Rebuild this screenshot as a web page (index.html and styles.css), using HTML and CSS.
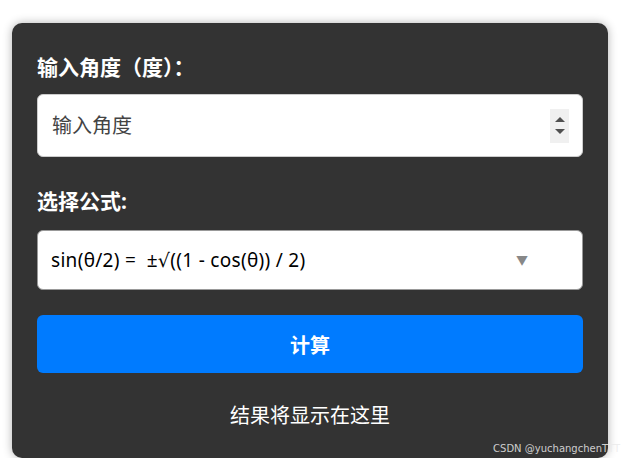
FILE: index.html
```html
<!DOCTYPE html>
<html lang="zh-CN">

<head>
    <meta charset="UTF-8">
    <meta name="viewport" content="width=device-width, initial-scale=1.0">
    <title>半角公式计算器</title>
    <link rel="stylesheet" href="styles.css">
</head>

<body>
    <div class="calculator">
        <!-- Angle input -->
        <label class="fieldLabel" for="angle">输入角度（度）：</label>
        <div class="numberBox">
            <input type="number" id="angle" class="angleInput" placeholder="输入角度">
            <span class="spinner">
                <span class="spinUp"></span>
                <span class="spinDown"></span>
            </span>
        </div>

        <!-- Formula select -->
        <label class="fieldLabel" for="formula">选择公式:</label>
        <div class="selectBox">
            <select id="formula" class="formulaSelect">
                <option value="sin">sin(θ/2) =&nbsp; ±√((1 - cos(θ)) / 2)</option>
                <option value="cos">cos(θ/2) =&nbsp; ±√((1 + cos(θ)) / 2)</option>
                <option value="tan">tan(θ/2) = sin(θ) / (1 + cos(θ))</option>
            </select>
            <span class="selectArrow">▼</span>
        </div>

        <button class="btnCalc" id="calcBtn">计算</button>

        <div class="result" id="result">结果将显示在这里</div>
    </div>

    <div class="watermark">CSDN @yuchangchenTTT</div>
</body>

</html>
```

FILE: styles.css
```css
body {
    font-family: "Noto Sans", "Noto Sans CJK SC", sans-serif;
    margin: 0;
    padding: 23px 14px 0 12px;
    background-color: #fff;
}

.calculator {
    background-color: #333;
    color: #fff;
    border-radius: 10px;
    box-shadow: 0 0 10px rgba(0, 0, 0, 0.3);
    padding: 30px 25px 27px;
    display: flex;
    flex-direction: column;
}

.fieldLabel {
    font-size: 21px;
    font-weight: bold;
    line-height: 28px;
    margin-bottom: 13px;
}

/* Number input */
.numberBox {
    display: flex;
    align-items: center;
    height: 63px;
    box-sizing: border-box;
    background: #fff;
    border: 1px solid #ccc;
    border-radius: 6px;
    padding: 0 13px 0 14px;
    margin-bottom: 30px;
}

.angleInput {
    flex: 1;
    border: none;
    outline: none;
    font-family: inherit;
    font-size: 20px;
    color: #333;
    padding: 0;
    -moz-appearance: textfield;
}

.angleInput::placeholder {
    color: #444;
}

.angleInput::-webkit-inner-spin-button,
.angleInput::-webkit-outer-spin-button {
    -webkit-appearance: none;
    margin: 0;
}

.spinner {
    display: flex;
    flex-direction: column;
    justify-content: center;
    align-items: center;
    gap: 7px;
    width: 19px;
    height: 34px;
    background: #f0f0f0;
}

.spinUp,
.spinDown {
    width: 0;
    height: 0;
    border-left: 5px solid transparent;
    border-right: 5px solid transparent;
}

.spinUp {
    border-bottom: 5px solid #505050;
}

.spinDown {
    border-top: 5px solid #505050;
}

/* Formula select */
.selectBox {
    display: flex;
    align-items: center;
    height: 60px;
    box-sizing: border-box;
    background: #fff;
    border: 1px solid #999;
    border-radius: 6px;
    padding: 0 54px 0 13px;
    margin-top: 2px;
    margin-bottom: 25px;
}

.formulaSelect {
    flex: 1;
    -webkit-appearance: none;
    appearance: none;
    border: none;
    outline: none;
    background: transparent;
    font-family: "Noto Sans", "DejaVu Sans", sans-serif;
    font-size: 19px;
    letter-spacing: 0.3px;
    color: #000;
    padding: 0;
}

.selectArrow {
    font-size: 12px;
    color: #888;
}

/* Button */
.btnCalc {
    height: 58px;
    border: none;
    border-radius: 6px;
    background-color: #007bff;
    color: #fff;
    font-family: inherit;
    font-size: 20px;
    font-weight: bold;
    cursor: pointer;
}

.btnCalc:hover {
    background-color: #0069d9;
}

.result {
    margin-top: 28px;
    text-align: center;
    font-size: 20px;
    line-height: 30px;
}

.watermark {
    position: absolute;
    right: 2px;
    top: 443px;
    font-family: "DejaVu Sans", sans-serif;
    font-size: 10px;
    color: rgba(235, 235, 235, 0.85);
}
```
